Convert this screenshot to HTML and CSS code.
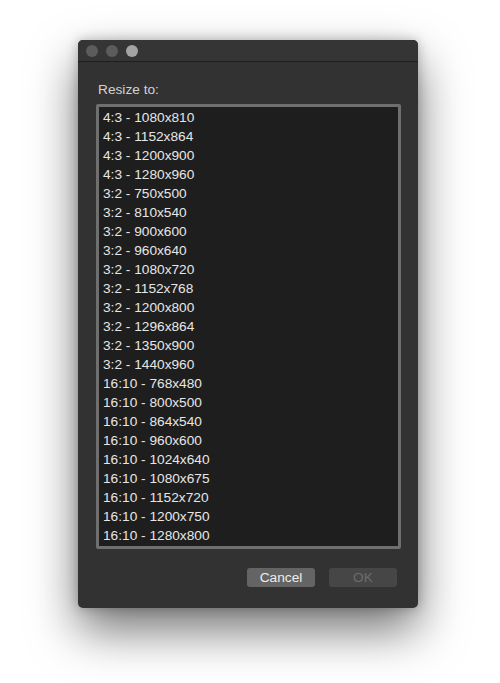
FILE: index.html
```html
<!DOCTYPE html>
<html>
<head>
<meta charset="utf-8">
<link rel="stylesheet" href="styles.css">
</head>
<body>
<div class="window">
  <div class="titlebar">
    <span class="dot"></span>
    <span class="dot"></span>
    <span class="dot dot-light"></span>
  </div>
  <div class="content">
    <div class="label">Resize to:</div>
    <div class="list">
      <div class="row">4:3 - 1080x810</div>
      <div class="row">4:3 - 1152x864</div>
      <div class="row">4:3 - 1200x900</div>
      <div class="row">4:3 - 1280x960</div>
      <div class="row">3:2 - 750x500</div>
      <div class="row">3:2 - 810x540</div>
      <div class="row">3:2 - 900x600</div>
      <div class="row">3:2 - 960x640</div>
      <div class="row">3:2 - 1080x720</div>
      <div class="row">3:2 - 1152x768</div>
      <div class="row">3:2 - 1200x800</div>
      <div class="row">3:2 - 1296x864</div>
      <div class="row">3:2 - 1350x900</div>
      <div class="row">3:2 - 1440x960</div>
      <div class="row">16:10 - 768x480</div>
      <div class="row">16:10 - 800x500</div>
      <div class="row">16:10 - 864x540</div>
      <div class="row">16:10 - 960x600</div>
      <div class="row">16:10 - 1024x640</div>
      <div class="row">16:10 - 1080x675</div>
      <div class="row">16:10 - 1152x720</div>
      <div class="row">16:10 - 1200x750</div>
      <div class="row">16:10 - 1280x800</div>
    </div>
    <div class="buttons">
      <button class="btn btn-cancel">Cancel</button>
      <button class="btn btn-ok">OK</button>
    </div>
  </div>
</div>
</body>
</html>
```
FILE: styles.css
```css
html, body {
  margin: 0;
  padding: 0;
  background: #ffffff;
}
body {
  font-family: "Liberation Sans", Arial, sans-serif;
  font-size: 13.7px;
  padding-top: 40px;
  padding-left: 78px;
  min-height: 683px;
  box-sizing: border-box;
}
.window {
  width: 340px;
  height: 568px;
  box-sizing: border-box;
  background: #323232;
  border-radius: 5px;
  box-shadow: 0 22px 48px rgba(0, 0, 0, 0.55), 0 0 12px rgba(0, 0, 0, 0.25);
  overflow: hidden;
}
.titlebar {
  height: 21px;
  border-bottom: 1px solid #1e1e1e;
  background: #353535;
  display: flex;
  align-items: center;
  gap: 8px;
  padding-left: 8px;
  box-sizing: content-box;
}
.dot {
  width: 12px;
  height: 12px;
  border-radius: 50%;
  background: #5c5c5c;
}
.dot-light {
  background: #a4a4a4;
}
.content {
  padding: 20px 21px 0 18px;
}
.label {
  height: 16px;
  line-height: 16px;
  color: #d2d2d2;
  padding-left: 2px;
}
.list {
  margin-top: 6px;
  width: 305px;
  height: 445px;
  box-sizing: border-box;
  border: 3px solid #6f6f6f;
  border-radius: 2px;
  background: #1e1e1e;
  padding: 1px 0 0 4px;
}
.row {
  height: 19px;
  line-height: 19px;
  color: #e6e6e6;
  white-space: nowrap;
}
.buttons {
  margin-top: 19px;
  display: flex;
  justify-content: flex-end;
  gap: 14px;
}
.btn {
  width: 68px;
  height: 19px;
  border: none;
  border-radius: 3px;
  font-family: "Liberation Sans", Arial, sans-serif;
  font-size: 13.7px;
  padding: 0;
  line-height: 19px;
}
.btn-cancel {
  background: #646464;
  color: #ececec;
}
.btn-ok {
  background: #464646;
  color: #6c6c6c;
}
```
